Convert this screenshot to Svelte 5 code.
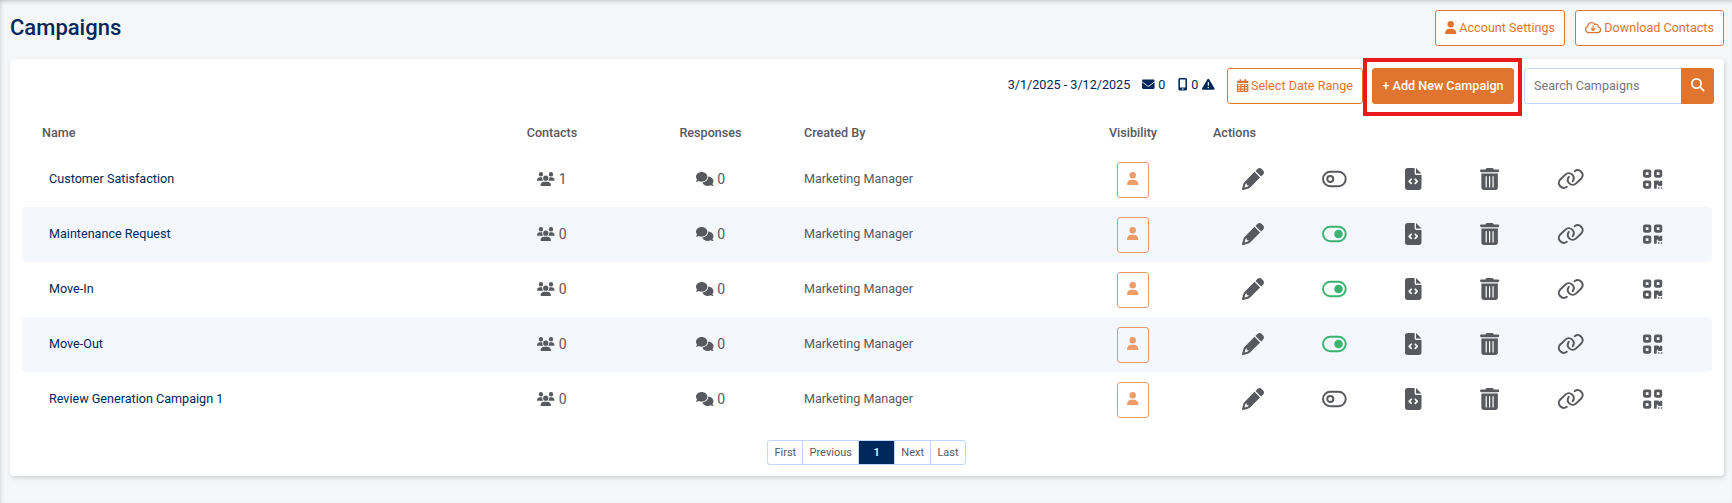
<script lang="ts">
	type Campaign = {
		name: string;
		contacts: number;
		responses: number;
		createdBy: string;
		active: boolean;
	};

	let campaigns = $state<Campaign[]>([
		{ name: 'Customer Satisfaction', contacts: 1, responses: 0, createdBy: 'Marketing Manager', active: false },
		{ name: 'Maintenance Request', contacts: 0, responses: 0, createdBy: 'Marketing Manager', active: true },
		{ name: 'Move-In', contacts: 0, responses: 0, createdBy: 'Marketing Manager', active: true },
		{ name: 'Move-Out', contacts: 0, responses: 0, createdBy: 'Marketing Manager', active: true },
		{ name: 'Review Generation Campaign 1', contacts: 0, responses: 0, createdBy: 'Marketing Manager', active: false }
	]);

	let search = $state('');

	const visible = $derived(
		campaigns.filter((c) => c.name.toLowerCase().includes(search.toLowerCase()))
	);
</script>

{#snippet userIcon()}
	<svg class="icon" viewBox="0 0 448 512"><path d="M224 256A128 128 0 1 0 224 0a128 128 0 1 0 0 256zm-45.7 48C79.8 304 0 383.8 0 482.3C0 498.7 13.3 512 29.7 512H418.3c16.4 0 29.7-13.3 29.7-29.7C448 383.8 368.2 304 269.7 304H178.3z" /></svg>
{/snippet}

<div class="page">
	<header class="page-header">
		<h1>Campaigns</h1>
		<div class="header-actions">
			<button class="btn">{@render userIcon()} Account Settings</button>
			<button class="btn">
				<svg class="icon line" viewBox="0 0 640 512"><path d="M144 456a120 120 0 0 1-38-234A150 150 0 0 1 384 134a92 92 0 0 1 134 92A116 116 0 0 1 500 456ZM320 200V364M248 300l72 72 72-72" /></svg>
				Download Contacts
			</button>
		</div>
	</header>

	<main class="card">
		<div class="toolbar">
			<span class="range">3/1/2025 - 3/12/2025</span>
			<span class="stat mail">
				<svg class="icon" viewBox="0 0 512 512"><path d="M48 64C21.5 64 0 85.5 0 112c0 15.1 7.1 29.3 19.2 38.4L236.8 313.6c11.4 8.5 27 8.5 38.4 0L492.8 150.4c12.1-9.1 19.2-23.3 19.2-38.4c0-26.5-21.5-48-48-48H48zM0 176V384c0 35.3 28.7 64 64 64H448c35.3 0 64-28.7 64-64V176L294.4 339.2c-22.8 17.1-54 17.1-76.8 0L0 176z" /></svg>
				0
			</span>
			<span class="stat sms">
				<svg class="icon" viewBox="0 0 384 512"><path fill-rule="evenodd" d="M80 0H304a64 64 0 0 1 64 64V448a64 64 0 0 1-64 64H80a64 64 0 0 1-64-64V64A64 64 0 0 1 80 0ZM80 64V384H304V64ZM152 424V464H232V424Z" /></svg>
				0
				<svg class="icon" viewBox="0 0 512 512"><path d="M256 32c14.2 0 27.3 7.5 34.5 19.8l216 368c7.3 12.4 7.3 27.7 .2 40.1S486.3 480 472 480H40c-14.3 0-27.6-7.7-34.7-20.1s-7-27.8 .2-40.1l216-368C228.7 39.5 241.8 32 256 32zm0 128c-13.3 0-24 10.7-24 24V296c0 13.3 10.7 24 24 24s24-10.7 24-24V184c0-13.3-10.7-24-24-24zm32 224a32 32 0 1 0 -64 0 32 32 0 1 0 64 0z" /></svg>
			</span>
			<button class="btn">
				<svg class="icon" viewBox="0 0 448 512"><path fill-rule="evenodd" d="M96 32a32 32 0 0 1 64 0V64H288V32a32 32 0 0 1 64 0V64h48a48 48 0 0 1 48 48v48H0V112A48 48 0 0 1 48 64H96ZM0 192H448V464a48 48 0 0 1-48 48H48a48 48 0 0 1-48-48ZM48 224v48h80V224Zm128 0v48h96V224Zm144 0v48h80V224ZM48 320v56h80V320Zm128 0v56h96V320Zm144 0v56h80V320ZM48 424v40h80V424Zm128 0v40h96V424Zm144 0v40h80V424Z" /></svg>
				Select Date Range
			</button>
			<div class="highlight">
				<button class="btn primary">+ Add New Campaign</button>
			</div>
			<div class="search">
				<input type="text" placeholder="Search Campaigns" bind:value={search} />
				<button class="search-btn" aria-label="Search">
					<svg class="icon line" viewBox="0 0 512 512"><circle cx="208" cy="208" r="176" /><path d="M340 340L480 480" /></svg>
				</button>
			</div>
		</div>

		<div class="table">
			<div class="row head">
				<span class="name">Name</span>
				<span class="center">Contacts</span>
				<span class="center">Responses</span>
				<span>Created By</span>
				<span class="center">Visibility</span>
				<span>Actions</span>
			</div>
			{#each visible as campaign (campaign.name)}
				<div class="row">
					<a class="name" href="#campaign">{campaign.name}</a>
					<span class="count">
						<svg class="icon" viewBox="0 0 640 512"><path d="M144 0a80 80 0 1 1 0 160A80 80 0 1 1 144 0zM512 0a80 80 0 1 1 0 160A80 80 0 1 1 512 0zM0 298.7C0 239.8 47.8 192 106.7 192h42.7c15.9 0 31 3.5 44.6 9.7c-1.3 7.2-1.9 14.7-1.9 22.3c0 38.2 16.8 72.5 43.3 96H21.3C9.6 320 0 310.4 0 298.7zM405.3 320c26-23.5 42.6-57.8 42.6-96c0-7.6-.7-15-1.9-22.3c13.6-6.3 28.7-9.7 44.6-9.7h42.7C592.2 192 640 239.8 640 298.7c0 11.8-9.6 21.3-21.3 21.3H405.3zM224 224a96 96 0 1 1 192 0 96 96 0 1 1-192 0zM128 485.3C128 411.7 187.7 352 261.3 352H378.7C452.3 352 512 411.7 512 485.3c0 14.7-11.9 26.7-26.7 26.7H154.7c-14.7 0-26.7-11.9-26.7-26.7z" /></svg>
						{campaign.contacts}
					</span>
					<span class="count">
						<svg class="icon" viewBox="0 0 640 512"><path d="M208 352c114.9 0 208-78.8 208-176S322.9 0 208 0S0 78.8 0 176c0 38.6 14.7 74.3 39.6 103.4c-7 19-20 31-32 42C-4 332 0 352 16 352c32 0 65-12 87.4-23.9C134.1 343.3 169.8 352 208 352zM448 176c0 112.3-99.1 196.9-216.5 207C255.8 457.4 336.4 512 432 512c38.2 0 73.9-8.7 104.7-23.9C559 500 592 512 624 512c16 0 20-20 8-30.6c-12-11-25-23-32-42c24.9-29 39.6-64.7 39.6-103.4c0-92.8-84.9-168.9-192.6-175.5c.6 5.1 1 10.3 1 15.5z" /></svg>
						{campaign.responses}
					</span>
					<span>{campaign.createdBy}</span>
					<span class="center">
						<button class="visibility" aria-label="Visibility">{@render userIcon()}</button>
					</span>
					<div class="actions">
						<button aria-label="Edit">
							<svg class="icon" viewBox="0 0 512 512"><path fill-rule="evenodd" d="M291 90L421 220L188 453Q171 469 151 475L31 510C12 516-4 499 1 481L36 360Q42 340 59 323ZM81 374L60 446Q62 452 66 452L138 431L160 399H128Q112 399 112 383V352ZM314 67L363 19C388-6 428-6 453 19L493 58C518 84 518 124 493 149L444 197Z" /></svg>
						</button>
						<button
							class:on={campaign.active}
							aria-label="Toggle"
							onclick={() => (campaign.active = !campaign.active)}
						>
							<svg class="icon toggle" viewBox="0 0 576 512">
								<rect x="24" y="88" width="528" height="336" rx="168" />
								{#if campaign.active}
									<circle class="knob" cx="384" cy="256" r="100" />
								{:else}
									<circle cx="192" cy="256" r="70" />
								{/if}
							</svg>
						</button>
						<button aria-label="Embed code">
							<svg class="icon" viewBox="0 0 384 512"><path d="M64 0A64 64 0 0 0 0 64V448a64 64 0 0 0 64 64H320a64 64 0 0 0 64-64V160H256a32 32 0 0 1-32-32V0ZM256 0V128H384Z" /><path class="cut" d="M146 262L98 310l48 48M238 262l48 48-48 48" /></svg>
						</button>
						<button aria-label="Delete">
							<svg class="icon" viewBox="0 0 448 512"><path d="M135 18A32 32 0 0 1 164 0H284a32 32 0 0 1 29 18L320 32H416a32 32 0 0 1 0 64H32a32 32 0 0 1 0-64h96ZM32 128H416V448a64 64 0 0 1-64 64H96a64 64 0 0 1-64-64Z" /><path class="cut bars" d="M144 200V440M224 200V440M304 200V440" /></svg>
						</button>
						<button aria-label="Copy link">
							<svg class="icon link" viewBox="0 0 640 512"><path d="M411 75C459 40 523 46 563 86C610 133 610 198 563 245L445 357C399 403 332 403 286 357C245 316 240 253 274 205M229 437C181 472 117 466 77 426C30 379 30 314 77 267L195 155C241 109 308 109 354 155C395 196 400 259 366 307" /></svg>
						</button>
						<button aria-label="QR code">
							<svg class="icon" viewBox="0 0 448 512"><path fill-rule="evenodd" d="M48 32h96a48 48 0 0 1 48 48v96a48 48 0 0 1-48 48H48a48 48 0 0 1-48-48V80A48 48 0 0 1 48 32ZM64 96v64h64V96ZM304 32h96a48 48 0 0 1 48 48v96a48 48 0 0 1-48 48h-96a48 48 0 0 1-48-48V80a48 48 0 0 1 48-48ZM320 96v64h64V96ZM48 288h96a48 48 0 0 1 48 48v96a48 48 0 0 1-48 48H48a48 48 0 0 1-48-48v-96a48 48 0 0 1 48-48ZM64 352v64h64v-64ZM272 288h80q16 0 16 16t16 16 16-16 16-16 32 16v96q0 16-16 16h-64q-16 0-16-16t-16-16-16 16v64q0 16-16 16h-32q-16 0-16-16V304q0-16 16-16ZM352 448h32v32h-32ZM416 448h32v32h-32Z" /></svg>
						</button>
					</div>
				</div>
			{/each}
		</div>

		<nav class="pagination">
			<button>First</button>
			<button>Previous</button>
			<button class="current">1</button>
			<button>Next</button>
			<button>Last</button>
		</nav>
	</main>
</div>

<style>
	:global(body) {
		background: #f5f6f8;
	}

	.page {
		box-sizing: border-box;
		height: 503px;
		padding: 10px 8px 0 10px;
		font-family: Roboto, sans-serif;
		font-size: 12.6px;
		color: #58595f;
		box-shadow:
			inset 0 4px 4px -3px rgba(0, 0, 0, 0.22),
			inset 4px 0 4px -3px rgba(0, 0, 0, 0.12);
	}

	button {
		font: inherit;
		color: inherit;
		cursor: pointer;
		padding: 0;
		border: none;
		background: none;
	}

	.icon {
		display: block;
		height: 1em;
		flex-shrink: 0;
		fill: currentColor;
		overflow: visible;
	}

	.line {
		fill: none;
		stroke: currentColor;
		stroke-width: 48;
		stroke-linecap: round;
		stroke-linejoin: round;
	}

	.page-header {
		display: flex;
		justify-content: space-between;
		height: 49px;
	}

	h1 {
		margin: 0;
		font-size: 22px;
		font-weight: 500;
		line-height: 35px;
		color: #00285a;
	}

	.header-actions {
		display: flex;
		gap: 10px;
	}

	.btn {
		box-sizing: border-box;
		height: 36px;
		padding: 0 9px 2px;
		display: flex;
		align-items: center;
		gap: 3px;
		border: 1px solid #e0752f;
		border-radius: 3px;
		background: #fff;
		color: #e0752f;
		white-space: nowrap;
	}

	.btn .icon {
		height: 13px;
	}

	.card {
		box-sizing: border-box;
		height: 417px;
		padding: 9px 12px 0;
		background: #fff;
		border-radius: 4px;
		box-shadow: 1px 2px 4px rgba(0, 0, 0, 0.15);
	}

	.toolbar {
		display: flex;
		justify-content: flex-end;
		align-items: center;
		height: 36px;
		margin-right: -2px;
		color: #00285a;
	}

	.range,
	.stat {
		padding-bottom: 3px;
	}

	.stat {
		display: flex;
		align-items: center;
		gap: 3.5px;
	}

	.mail {
		margin-left: 12px;
	}

	.sms {
		margin: 0 12px 0 13px;
	}

	/* outlined frame drawn around the add button */
	.highlight {
		z-index: 1;
		align-self: flex-start;
		margin-top: -10px;
		padding: 6px 4px 8px 5px;
		border: 4px solid #e81a1c;
	}

	.primary {
		width: 142px;
		justify-content: center;
		background: #e0752f;
		color: #fff;
		font-weight: 500;
	}

	.search {
		display: flex;
		margin-left: 2px;
	}

	.search input {
		box-sizing: border-box;
		width: 157px;
		height: 36px;
		padding: 0 9px 1px;
		border: 1px solid #c2d7fb;
		border-right: none;
		border-radius: 3px 0 0 3px;
		font: inherit;
		outline: none;
	}

	.search input::placeholder {
		color: #74777f;
	}

	.search-btn {
		width: 33px;
		display: flex;
		align-items: center;
		justify-content: center;
		padding-bottom: 2px;
		background: #e0752f;
		color: #fff;
		border-radius: 0 3px 3px 0;
	}

	.search-btn .line {
		height: 13.5px;
		stroke-width: 66;
	}

	.row {
		box-sizing: border-box;
		display: grid;
		grid-template-columns: 465px 130px 187px 249px 160px 478px;
		align-items: center;
		height: 55px;
		padding-bottom: 2px;
		border-radius: 4px;
	}

	.row:nth-child(odd):not(.head) {
		background: #f4f7fe;
	}

	.row.head {
		height: 48px;
		padding: 8px 0 0;
		font-weight: 500;
	}

	.name {
		padding-left: 27px;
		color: #00285a;
		text-decoration: none;
	}

	.head .name {
		padding-left: 20px;
		color: inherit;
	}

	.center {
		display: flex;
		justify-content: center;
	}

	.count {
		display: flex;
		align-items: center;
		justify-content: center;
		gap: 4px;
		font-size: 14px;
	}

	.visibility {
		width: 32px;
		height: 36px;
		margin-top: 3px;
		padding-bottom: 3px;
		display: flex;
		align-items: center;
		justify-content: center;
		border: 1px solid #e99a65;
		border-radius: 3px;
		color: #eb9c69;
	}

	.visibility .icon {
		height: 13px;
	}

	.actions {
		display: flex;
		align-items: center;
		justify-content: space-around;
		font-size: 22px;
	}

	.on {
		color: #3cb371;
	}

	.toggle,
	.link {
		fill: none;
		stroke: currentColor;
		stroke-width: 46;
		stroke-linecap: round;
	}

	.knob {
		fill: currentColor;
		stroke: none;
	}

	.cut {
		fill: none;
		stroke: #fff;
		stroke-width: 40;
		stroke-linecap: round;
		stroke-linejoin: round;
	}

	.bars {
		stroke-width: 28;
	}

	.pagination {
		display: flex;
		justify-content: center;
		margin-top: 13px;
		font-size: 11px;
	}

	.pagination button {
		box-sizing: border-box;
		height: 25px;
		padding: 0 6.2px 1px;
		border: 1px solid #c2d7fb;
		margin-left: -1px;
	}

	.pagination button:first-child {
		border-radius: 3px 0 0 3px;
	}

	.pagination button:last-child {
		border-radius: 0 3px 3px 0;
	}

	.pagination .current {
		width: 37px;
		background: #00285a;
		color: #fff;
		font-weight: 500;
	}
</style>
